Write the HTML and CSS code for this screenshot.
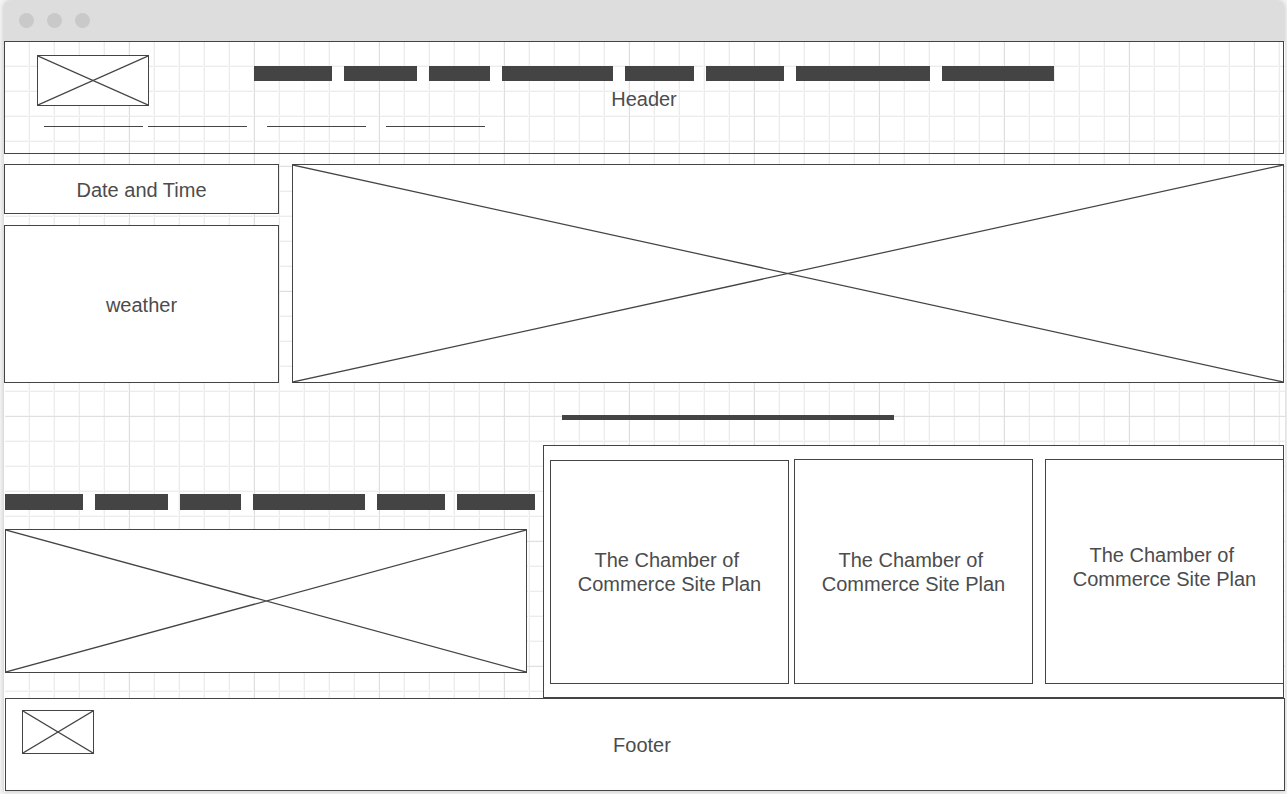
FILE: index.html
```html
<!DOCTYPE html>
<html lang="en">
<head>
<meta charset="utf-8">
<meta name="viewport" content="width=device-width, initial-scale=1">
<title>The Chamber of Commerce Site Plan</title>
<link rel="stylesheet" href="styles.css">
</head>
<body>
<div class="window">
  <div class="titlebar"><span class="dot"></span><span class="dot"></span><span class="dot"></span></div>
  <div class="canvas">
    <header class="box header">
      <div class="header-body">
        <div class="header-top">
          <svg class="picture logo" viewBox="0 0 100 100" preserveAspectRatio="none"><path d="M0 0 100 100M100 0 0 100"/></svg>
          <ul class="bars">
            <li class="bar w78"></li><li class="bar w73"></li><li class="bar w61"></li><li class="bar w111"></li><li class="bar w69"></li><li class="bar w78"></li><li class="bar w134"></li><li class="bar w112"></li>
          </ul>
        </div>
        <div class="rules">
          <div class="rule-pair"><span class="rule"></span><span class="rule"></span></div>
          <span class="rule"></span><span class="rule"></span>
        </div>
      </div>
      <p class="header-label">Header</p>
    </header>

    <main>
      <section class="hero">
        <div class="side">
          <div class="box date">Date and Time</div>
          <div class="box weather">weather</div>
        </div>
        <svg class="picture banner" viewBox="0 0 100 100" preserveAspectRatio="none"><path d="M0 0 100 100M100 0 0 100"/></svg>
      </section>

      <div class="divider"></div>

      <section class="lower">
        <div class="feature">
          <ul class="bars tall">
            <li class="bar w78"></li><li class="bar w73"></li><li class="bar w61"></li><li class="bar w112"></li><li class="bar w68"></li><li class="bar w78"></li>
          </ul>
          <svg class="picture photo" viewBox="0 0 100 100" preserveAspectRatio="none"><path d="M0 0 100 100M100 0 0 100"/></svg>
        </div>
        <div class="box panel">
          <article class="box card first"><p>The Chamber of&nbsp;<br>Commerce Site Plan</p></article>
          <article class="box card middle"><p>The Chamber of&nbsp;<br>Commerce Site Plan</p></article>
          <article class="box card last"><p>The Chamber of&nbsp;<br>Commerce Site Plan</p></article>
        </div>
      </section>
    </main>

    <footer class="box footer">
      <svg class="picture badge" viewBox="0 0 100 100" preserveAspectRatio="none"><path d="M0 0 100 100M100 0 0 100"/></svg>
      <p class="footer-label">Footer</p>
    </footer>
  </div>
</div>
</body>
</html>
```
FILE: styles.css
```css
* { box-sizing: border-box; }

body {
  margin: 0;
  background: #f5f5f5;
  color: #4c4c4c;
  font: 20px/24px "Liberation Sans", Arial, sans-serif;
}

p, ul { margin: 0; padding: 0; }

.window {
  margin: 0 2px 2px 3px;
  border-radius: 8px 8px 0 0;
  box-shadow: 0 0 4px #cccccc;
}

.titlebar {
  display: flex;
  align-items: center;
  gap: 13px;
  height: 41px;
  padding-left: 16px;
  background: #dddddd;
  border-radius: 8px 8px 0 0;
}

.dot {
  width: 15px;
  height: 15px;
  border-radius: 50%;
  background: #c9c9c9;
}

/* Grid paper: a line every 25px, a darker one every 125px */
.canvas {
  padding-bottom: 1px;
  border-left: 1px solid #dddddd;
  background-color: #ffffff;
  background-image:
    linear-gradient(to right, transparent 124px, #dfdfdf 124px),
    linear-gradient(to bottom, transparent 124px, #dfdfdf 124px),
    linear-gradient(to right, transparent 23px, #f8f8f8 23px, #f8f8f8 24px, #ececec 24px),
    linear-gradient(to bottom, transparent 23px, #f8f8f8 23px, #f8f8f8 24px, #ececec 24px);
  background-size: 125px 125px, 125px 125px, 25px 25px, 25px 25px;
  background-position: 1px 1px;
  box-shadow: inset 1px 0 #ffffff;
}

.box { border: 1px solid #444444; }

.picture {
  display: block;
  border: 1px solid #444444;
  background: #ffffff;
}

.picture path {
  fill: none;
  stroke: #444444;
  stroke-width: 1.25px;
  vector-effect: non-scaling-stroke;
}

.header {
  display: grid;
  height: 113px;
  margin-right: 1px;
}

.header-body, .header-label { grid-area: 1 / 1; }

.header-label { place-self: center; padding-top: 2px; }

.header-body { padding: 13px 32px; }

.header-top { display: flex; gap: 105px; }

.logo { flex: none; width: 112px; height: 51px; }

.bars {
  display: flex;
  gap: 12px;
  list-style: none;
}

.header .bars { padding-top: 11px; }

.bar { flex: none; height: 15px; background: #444444; }
.tall .bar { height: 16px; }

.w61 { width: 61px; }
.w68 { width: 68px; }
.w69 { width: 69px; }
.w73 { width: 73px; }
.w78 { width: 78px; }
.w111 { width: 111px; }
.w112 { width: 112px; }
.w134 { width: 134px; }

.rules {
  display: flex;
  gap: 20px;
  padding: 20px 7px 0;
}

.rule-pair { display: flex; gap: 5px; }

.rule { width: 99px; height: 1px; background: #444444; }

.hero {
  display: flex;
  gap: 13px;
  height: 219px;
  margin: 10px 1px 0 0;
}

.side {
  display: flex;
  flex: none;
  flex-direction: column;
  gap: 11px;
  width: 275px;
}

.date, .weather {
  display: grid;
  place-items: center;
  padding-top: 2px;
  background: #ffffff;
}

.date { height: 50px; }
.weather { flex: 1; }

.banner { flex: 1; min-width: 0; height: 100%; }

.divider {
  width: 332px;
  height: 5px;
  margin: 32px auto 25px 558px;
  background: #444444;
}

.lower {
  display: grid;
  grid-template-columns: minmax(0, 539fr) minmax(0, 741fr);
  margin-right: 1px;
}

.feature { padding: 49px 16px 0 1px; }

.photo { width: 100%; height: 144px; margin-top: 19px; }

.panel {
  display: grid;
  grid-template-columns: minmax(0, 244fr) minmax(0, 251fr) minmax(0, 238fr);
  height: 253px;
  padding: 13px 0 13px 6px;
  background: #ffffff;
}

.card {
  display: grid;
  place-items: center;
  text-align: center;
}

.first { margin: 1px 5px 0 0; }

.middle { margin-right: 12px; }

.last {
  padding-bottom: 10px;
  border-right: 0;
}

.footer {
  display: grid;
  height: 93px;
  margin-left: 1px;
  background: #ffffff;
}

.badge, .footer-label { grid-area: 1 / 1; }

.badge { width: 72px; height: 44px; margin: 11px 16px; }

.footer-label { place-self: center; padding-right: 6px; }
```
